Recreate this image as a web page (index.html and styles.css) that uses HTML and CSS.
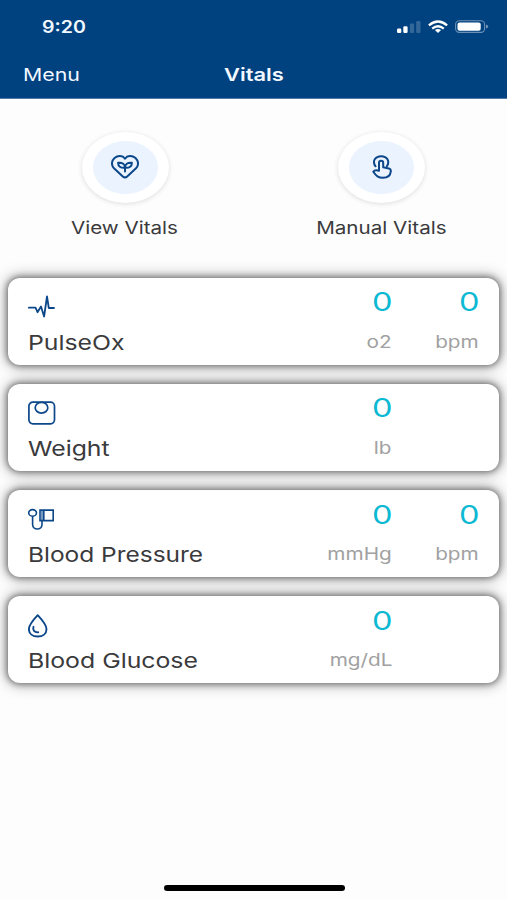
FILE: index.html
```html
<!DOCTYPE html>
<html lang="en">
<head>
<meta charset="utf-8">
<title>Vitals</title>
<link rel="stylesheet" href="styles.css">
</head>
<body>
<div class="screen">
  <header class="header">
    <div class="status">
      <span class="time">9:20</span>
      <div class="indicators">
        <svg class="signal" width="24" height="14" viewBox="0 0 24 14" fill="#fff"><rect x="0" y="8.5" width="4.3" height="4.5" rx="1.2"/><rect x="6.3" y="6.3" width="4.3" height="6.7" rx="1.2"/><g opacity=".2"><rect x="12.8" y="3.6" width="4.3" height="9.4" rx="1.2"/><rect x="19.2" y="1" width="4.3" height="12" rx="1.2"/></g></svg>
        <svg class="wifi" width="20" height="14" viewBox="0 0 20 14" fill="none" stroke="#fff" stroke-width="2.2"><path d="M.9 5.3Q10-2.3 19.1 5.3M4.2 8.6Q10 3.9 15.8 8.6"/><path d="M6.9 10.1Q10 7.8 13.1 10.1L10 13Z" fill="#fff" stroke="none"/></svg>
        <svg class="battery" width="34" height="14" viewBox="0 0 34 14"><rect x=".6" y=".8" width="29" height="11.6" rx="3.6" fill="none" stroke="#fff" stroke-opacity=".42" stroke-width="1.1"/><rect x="2.5" y="2.4" width="23.2" height="8.4" rx="2" fill="#fff"/><path d="M31 4.6Q33.2 5.3 33.2 6.6T31 8.6Z" fill="#fff" fill-opacity=".45"/></svg>
      </div>
    </div>
    <nav class="nav">
      <span class="menu">Menu</span>
      <h1 class="title">Vitals</h1>
      <span></span>
    </nav>
  </header>
  <main>
    <section class="actions">
      <div class="action">
        <div class="disc"><div class="disc-inner">
          <svg width="28" height="24" viewBox="0 0 28 24" fill="none" stroke="#0c478a" stroke-width="2" stroke-linejoin="round" stroke-linecap="round"><path d="M14 3.7C11.7 .3 6.8.3 3.5 3 .1 6.2.3 10.6 3 13.3L11.8 21.4Q14 23.4 16.2 21.4L25 13.3C27.7 10.6 27.9 6.2 24.5 3 21.2.3 16.3.3 14 3.7Z"/><path d="M14 16.5V11.2M14 12.8C9.5 13.3 7.1 11.1 7.1 7.7 11.5 7.3 14 9.4 14 12.8ZM14 12.8C14 9.4 16.5 7.3 20.9 7.7 20.9 11.1 18.5 13.3 14 12.8Z"/></svg>
        </div></div>
        <span class="label">View Vitals</span>
      </div>
      <div class="action">
        <div class="disc"><div class="disc-inner">
          <svg width="20" height="24" viewBox="0 0 20 24" fill="none" stroke="#0c478a" stroke-width="2" stroke-linejoin="round" stroke-linecap="round"><path d="M3.5 11.3C-.2 6.1 3.4 1.2 9.2 1.2S18.2 6.1 14.9 11.2"/><path d="M7 15.7V8C7 5.1 11.2 5.1 11.2 8V12.2L16.8 13.4Q19 14 18.8 16.4C18.4 20.6 15.6 22.8 11 22.8 6.2 22.8 4.2 21 1.3 16.8 2.6 14.4 5 15.1 7 15.7Z"/></svg>
        </div></div>
        <span class="label">Manual Vitals</span>
      </div>
    </section>
    <section class="cards">
      <article class="card">
        <div class="name-col">
          <svg class="icon" width="28" height="24" viewBox="0 0 28 24" fill="none" stroke="#0c478a" stroke-width="1.8" stroke-linejoin="round" stroke-linecap="round"><path d="M.8 12.7H7.5L9.5 17.2 13 11.5 16.1 21.5 19 1.5 20.8 13H26"/></svg>
          <span class="name">PulseOx</span>
        </div>
        <div class="reading"><span class="value">0</span><span class="unit">o2</span></div>
        <div class="reading"><span class="value">0</span><span class="unit">bpm</span></div>
      </article>
      <article class="card">
        <div class="name-col">
          <svg class="icon" width="28" height="24" viewBox="0 0 28 24" fill="none" stroke="#0c478a" stroke-width="1.7"><rect x=".9" y="1.2" width="25.6" height="21.6" rx="4"/><ellipse cx="13.5" cy="6.7" rx="6.3" ry="5.4"/></svg>
          <span class="name">Weight</span>
        </div>
        <div class="reading"><span class="value">0</span><span class="unit">lb</span></div>
        <div class="reading"></div>
      </article>
      <article class="card">
        <div class="name-col">
          <svg class="icon" width="28" height="24" viewBox="0 0 28 24" fill="none" stroke="#0c478a" stroke-width="1.6"><ellipse cx="4.6" cy="4.9" rx="3.9" ry="3.3"/><path d="M4.6 8.2V16.5C4.6 22.5 14 22.5 14 16.5V13M12 2.1H25.2V12.6H12ZM15.8 2.1V12.6"/><path d="M13.9 2V13" stroke-width="2.2" opacity=".55"/></svg>
          <span class="name name-long">Blood Pressure</span>
        </div>
        <div class="reading"><span class="value">0</span><span class="unit">mmHg</span></div>
        <div class="reading"><span class="value">0</span><span class="unit">bpm</span></div>
      </article>
      <article class="card">
        <div class="name-col">
          <svg class="icon" width="28" height="24" viewBox="0 0 28 24" fill="none" stroke="#0c478a" stroke-width="1.9" stroke-linecap="round" stroke-linejoin="round"><path d="M9.7 1.2Q.9 10.6 .9 15.2C.9 19.7 4.6 22.5 9.7 22.5S18.5 19.7 18.5 15.2Q18.5 10.6 9.7 1.2Z"/><path d="M5.5 12.8C4.3 16.2 6.5 18.6 10.2 18.3"/></svg>
          <span class="name">Blood Glucose</span>
        </div>
        <div class="reading"><span class="value">0</span><span class="unit">mg/dL</span></div>
        <div class="reading"></div>
      </article>
    </section>
  </main>
  <footer class="footer"><div class="home-bar"></div></footer>
</div>
</body>
</html>
```
FILE: styles.css
```css
* { box-sizing: border-box; }
body { margin: 0; background: #fdfdfd; font-family: Inter, "Liberation Sans", sans-serif; color: #3a3a3c; }
.screen { width: 507px; height: 900px; display: flex; flex-direction: column; overflow: hidden; }
.header { height: 98.5px; background: #00417f; border-bottom: 1px solid #527ba9; color: #f2f8ff; }
.status { height: 53px; display: flex; justify-content: space-between; padding: 0 18px 0 42px; align-items: center; }
.time { font-size: 17px; font-weight: 600; transform: scaleX(1.15); transform-origin: left; }
.indicators { display: flex; align-items: center; }
.wifi { margin-left: 7px; }
.battery { margin-left: 7px; }
.nav { height: 42px; display: grid; grid-template-columns: 1fr auto 1fr; align-items: center; padding: 0 23px; }
.menu { font-size: 17.5px; transform: scaleX(1.22); transform-origin: left; }
.title { margin: 0; font-size: 17.5px; font-weight: 600; transform: scaleX(1.25); }
main { flex: 1; }
.actions { height: 179px; padding-top: 33px; display: flex; }
.action { flex: 1; display: flex; flex-direction: column; align-items: center; }
.action:first-child { padding-right: 5px; }
.action:last-child { padding-left: 1px; }
.disc { width: 87px; height: 71px; border-radius: 50%; background: #fff; display: flex; align-items: center; justify-content: center; box-shadow: 0 1px 5px rgba(0, 0, 0, .13); }
.disc-inner { width: 65px; height: 53px; border-radius: 50%; background: #ebf3ff; display: flex; align-items: center; justify-content: center; }
.label { margin: 14px 1px 0 0; font-size: 17.5px; line-height: 22px; white-space: nowrap; transform: scaleX(1.178); }
.cards { display: flex; flex-direction: column; gap: 19.3px; padding: 0 8px; }
.card { height: 87px; border-radius: 12px; background: #fff; box-shadow: 0 0 6px 1px rgba(0, 0, 0, .48), 0 0 14px 3px rgba(0, 0, 0, .28); display: flex; padding: 0 21px 0 20px; position: relative; }
.name-col { flex: 1; padding-top: 17.5px; }
.icon { display: block; }
.name { display: inline-block; margin-top: 10.5px; font-size: 20.5px; line-height: 26px; white-space: nowrap; transform: scaleX(1.21); transform-origin: left; }
.name-long { transform: scaleX(1.193); }
.reading { width: 87px; display: flex; flex-direction: column; align-items: flex-end; padding-top: 8.5px; }
.value { margin-right: -1px; font-size: 26px; font-weight: 400; line-height: 32px; color: #0cb9d2; transform: scaleX(1.25); transform-origin: right; }
.unit { margin: 12.5px -1px 0 0; font-size: 17px; line-height: 22px; color: #a1a1a1; transform: scaleX(1.22); transform-origin: right; }
.footer { height: 17px; display: flex; justify-content: center; }
.home-bar { width: 181px; height: 6px; margin: 2px 0 0 1px; border-radius: 3px; background: #000; }
```
